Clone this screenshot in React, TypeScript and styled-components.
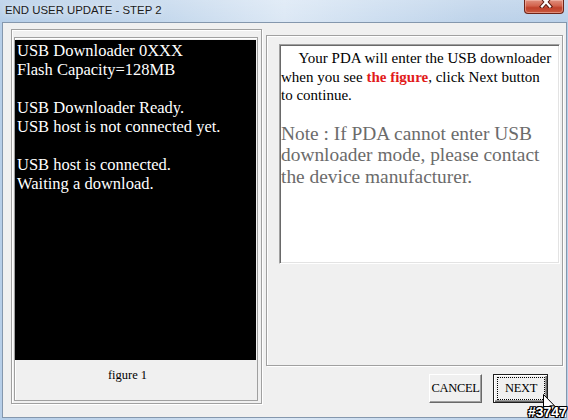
import React from "react";
import styled, { createGlobalStyle } from "styled-components";

const Global = createGlobalStyle`
  html, body { margin: 0; padding: 0; background: #fff; }
  body { width: 568px; height: 420px; overflow: hidden; font-family: "Liberation Serif", serif; }
`;

const Window = styled.div`
  position: relative;
  width: 568px;
  height: 420px;
  box-sizing: border-box;
  padding: 0 1px 2px 2px;
  display: flex;
  flex-direction: column;
  overflow: hidden;
  background:
    linear-gradient(180deg, rgba(255,255,255,0.18) 0%, rgba(255,255,255,0) 22px),
    linear-gradient(90deg, #b6cee8 0%, #c3d7ec 28%, #dce8f5 50%, #cddef0 66%, #bed3ea 84%, #b9d0e9 100%);
`;

const TitleBar = styled.div`
  height: 22px;
  flex: none;
  display: flex;
  align-items: flex-start;
`;

const Title = styled.div`
  padding-left: 3px;
  font-family: "Liberation Sans", Arial, sans-serif;
  font-size: 11.4px;
  line-height: 20px;
  color: #1b1b1b;
  text-shadow: 0 0 6px rgba(255,255,255,0.9);
  white-space: nowrap;
`;

const CloseButton = styled.div`
  margin-left: auto;
  margin-right: 3px;
  width: 40px;
  height: 14px;
  box-sizing: border-box;
  border: 1px solid #6e2418;
  border-top: none;
  border-radius: 0 0 4px 4px;
  background: linear-gradient(180deg, #e0907f 0%, #d2634d 45%, #c0412b 60%, #c85a40 100%);
  box-shadow: inset 0 0 0 1px rgba(255, 210, 200, 0.45);
  display: flex;
  justify-content: center;
  overflow: hidden;
`;

const CloseGlyph = styled.svg`
  margin-top: -4px;
  margin-left: 3px;
`;

const Client = styled.div`
  flex: 1;
  box-sizing: border-box;
  border: 1px solid #8497ad;
  background: #f0f0f0;
  display: flex;
  padding: 6px 3px 0 8px;
`;

const LeftFrame = styled.div`
  width: 251px;
  height: 375px;
  box-sizing: border-box;
  border: 1px solid #a0a0a0;
  box-shadow: inset 1px 1px 0 #fff, 1px 1px 0 #fff;
  padding: 7px 3px 2px 2px;
  display: flex;
  flex-direction: column;
`;

const Picture = styled.div`
  flex: 1;
  border: 1px solid #a0a0a0;
  box-shadow: inset 1px 1px 0 #fff;
  padding: 2px 1px 0 0;
  display: flex;
  flex-direction: column;
`;

const Screen = styled.div`
  height: 320px;
  background: #000;
  color: #fff;
  font-family: "Liberation Serif", "Times New Roman", serif;
  font-size: 16.5px;
  line-height: 19px;
  padding: 1px 2px;
  box-sizing: border-box;
  white-space: pre;
`;

const Caption = styled.div`
  padding: 7px 16px 0 0;
  text-align: center;
  font-family: "Liberation Serif", "Times New Roman", serif;
  font-size: 12.5px;
  line-height: 16px;
  color: #000;
`;

const RightCol = styled.div`
  margin-left: 4px;
  width: 297px;
  display: flex;
  flex-direction: column;
`;

const RightFrame = styled.div`
  margin-top: 6px;
  height: 331px;
  box-sizing: border-box;
  border: 1px solid #a0a0a0;
  box-shadow: inset 1px 1px 0 #fff, 1px 1px 0 #fff;
  padding: 8px 2px 0 12px;
`;

const TextBox = styled.div`
  height: 220px;
  box-sizing: border-box;
  background: #fff;
  border-style: solid;
  border-width: 1px;
  border-color: #a0a0a0 #fff #fff #a0a0a0;
  box-shadow: inset 1px 1px 0 #696969, inset -1px -1px 0 #e3e3e3;
  padding: 4px 0 0 1px;
  font-family: "Liberation Serif", "Times New Roman", serif;
  white-space: nowrap;
`;

const Intro = styled.p`
  margin: 0;
  font-size: 15px;
  line-height: 18.5px;
  color: #000;
  text-indent: 17.5px;
`;

const Highlight = styled.b`
  color: #e21b1b;
  font-weight: bold;
`;

const Note = styled.p`
  margin: 18px 0 0;
  font-size: 19.4px;
  line-height: 21.5px;
  color: #6b6b6b;
`;

const ButtonRow = styled.div`
  margin-top: 8px;
  display: flex;
  justify-content: flex-end;
  gap: 11px;
  padding-right: 15px;
`;

const Button = styled.div<{ $default?: boolean; $w: number }>`
  width: ${(p) => p.$w}px;
  height: 29px;
  box-sizing: border-box;
  background: #f0f0f0;
  font-family: "Liberation Serif", "Times New Roman", serif;
  font-size: 12.5px;
  letter-spacing: -0.3px;
  color: #000;
  display: flex;
  ${(p) =>
    p.$default
      ? `border: 1px solid #1e1e1e;
         box-shadow: inset 1px 1px 0 #fff, inset -1px -1px 0 #696969, inset -2px -2px 0 #a0a0a0;
         padding: 2px 2px 2px 3px;`
      : `border-style: solid;
         border-width: 1px;
         border-color: #fff #696969 #696969 #fff;
         box-shadow: inset -1px -1px 0 #a0a0a0;
         align-items: center;
         justify-content: center;`}
`;

const FocusRing = styled.span`
  flex: 1;
  border: 1px dotted #000;
  display: flex;
  align-items: center;
  justify-content: center;
`;

const Watermark = styled.div`
  position: absolute;
  left: 528px;
  top: 405px;
  font-family: "Liberation Sans", Arial, sans-serif;
  font-weight: bold;
  font-size: 14px;
  line-height: 14px;
  color: #fff;
  text-shadow: 1px 0 0 #000, -1px 0 0 #000, 0 1px 0 #000, 0 -1px 0 #000,
    1px 1px 0 #000, -1px -1px 0 #000, 1px -1px 0 #000, -1px 1px 0 #000;
`;

const Cursor = styled.svg`
  position: absolute;
  left: 543px;
  top: 394px;
`;

export default function App() {
  return (
    <>
      <Global />
      <Window>
        <TitleBar>
          <Title>END USER UPDATE - STEP 2</Title>
          <CloseButton>
            <CloseGlyph width="14" height="12" viewBox="0 0 14 12">
              <path d="M3 1.5 L11 10.5 M11 1.5 L3 10.5" stroke="#5a1a10" strokeWidth="4.2" strokeLinecap="square" fill="none" />
              <path d="M3 1.5 L11 10.5 M11 1.5 L3 10.5" stroke="#ffffff" strokeWidth="2.2" strokeLinecap="square" fill="none" />
            </CloseGlyph>
          </CloseButton>
        </TitleBar>
        <Client>
          <LeftFrame>
            <Picture>
              <Screen>
                {"USB Downloader 0XXX\nFlash Capacity=128MB\n\nUSB Downloader Ready.\nUSB host is not connected yet.\n\nUSB host is connected.\nWaiting a download."}
              </Screen>
              <Caption>figure 1</Caption>
            </Picture>
          </LeftFrame>
          <RightCol>
            <RightFrame>
              <TextBox>
                <Intro>
                  Your PDA will enter the USB downloader
                  <br />
                  when you see <Highlight>the figure</Highlight>, click Next button
                  <br />
                  to continue.
                </Intro>
                <Note>
                  Note : If PDA cannot enter USB
                  <br />
                  downloader mode, please contact
                  <br />
                  the device manufacturer.
                </Note>
              </TextBox>
            </RightFrame>
            <ButtonRow>
              <Button $w={53}>CANCEL</Button>
              <Button $w={55} $default>
                <FocusRing>NEXT</FocusRing>
              </Button>
            </ButtonRow>
          </RightCol>
        </Client>
        <Cursor width="12" height="19" viewBox="0 0 12 19">
          <path d="M0.5 0.5 L0.5 16.5 L4.5 12.7 L7.2 18.5 L9.4 17.5 L6.8 11.8 L11.5 11.8 Z" fill="#fff" stroke="#000" strokeWidth="1" strokeLinejoin="miter" />
        </Cursor>
        <Watermark>#3747</Watermark>
      </Window>
    </>
  );
}
